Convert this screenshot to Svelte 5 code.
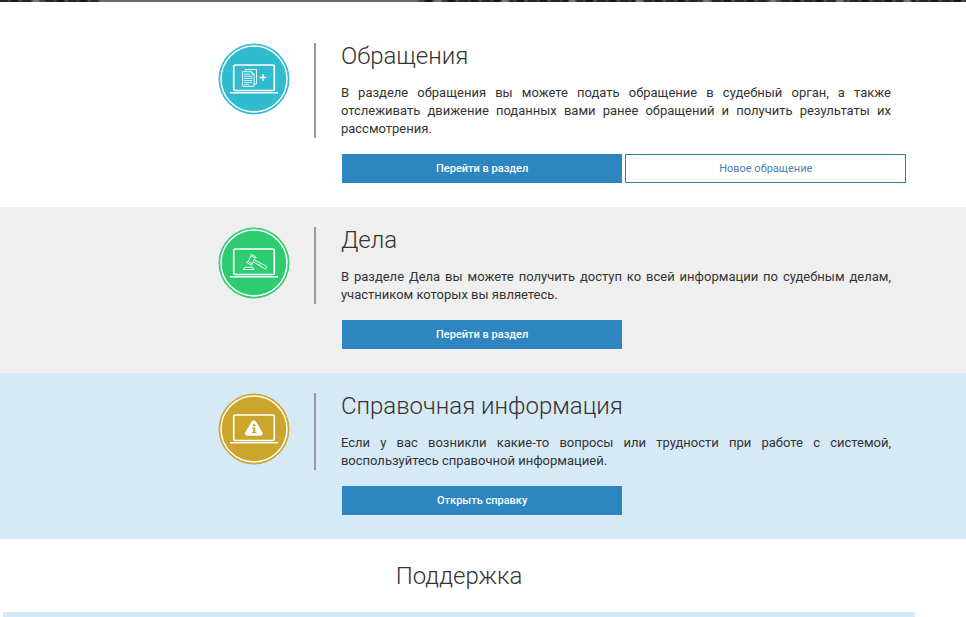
<script lang="ts">
	const sections = [
		{
			id: 'appeals',
			title: 'Обращения',
			text: 'В разделе обращения вы можете подать обращение в судебный орган, а также отслеживать движение поданных вами ранее обращений и получить результаты их рассмотрения.',
			buttons: ['Перейти в раздел', 'Новое обращение'],
		},
		{
			id: 'cases',
			title: 'Дела',
			text: 'В разделе Дела вы можете получить доступ ко всей информации по судебным делам, участником которых вы являетесь.',
			buttons: ['Перейти в раздел'],
		},
		{
			id: 'help',
			title: 'Справочная информация',
			text: 'Если у вас возникли какие-то вопросы или трудности при работе с системой, воспользуйтесь справочной информацией.',
			buttons: ['Открыть справку'],
		},
	];
</script>

<div class="banner"></div>

<main>
	{#each sections as section}
		<section class={section.id}>
			<svg class="icon" viewBox="0 0 72 72" fill="none" stroke="#fff" aria-hidden="true">
				<circle class="disc" cx="36" cy="36" r="35" />
				<circle cx="36" cy="36" r="33" stroke-width="1.5" />
				<rect x="15.7" y="22" width="40.6" height="25.5" rx="1.5" stroke-width="1.6" />
				<path d="M12 49.7h48" stroke-width="1.6" />
				{#if section.id === 'appeals'}
					<path d="M27.5 28v-1.5H38.5v14.5H36.2" stroke-width="0.9" />
					<path d="M24.5 28.7h9.2l2.4 2.4v12.2H24.5zM33.7 28.7v2.4h2.4" stroke-width="0.9" />
					<path d="M26 31.2h6M26 33.3h8.5M26 35.4h8.5M26 37.5h8.5M26 39.6h8.5M26 41.6h5" stroke-width="0.8" />
					<path d="M45 31.3v6.4M41.8 34.5h6.4" stroke-width="1.4" />
				{:else if section.id === 'cases'}
					<g stroke-width="0.9" stroke-linejoin="round">
						<path d="M33.2 28.8l-3.2 5.6 4 2.4 3.2-5.6z" />
						<path d="M32.3 28.4l.9-1.2 5 2.9-.6 1.4M29.4 34l-.8 1.4 5 2.9.9-1.4" />
						<path d="M36.4 32.9l11.6 6.2c1.3.8.3 3.4-1.3 2.6L35.3 34.9" />
						<path d="M42.5 36.2l-1.3 2.2M26.7 40.3h8l1.3 2.2H25z" />
					</g>
				{:else}
					<path d="M33.4 28.9c1-2 3.8-2 4.8 0l6 10.2c1 1.9 0 3.7-2 3.7H29.4c-2 0-3-1.8-2-3.7z" fill="#fff" stroke="none" />
					<circle class="mark" cx="36.2" cy="32.2" r="1.3" />
					<path class="mark" d="M34.3 34.4h3v4.5h1v1.4h-4.2v-1.4h1v-3h-.8z" />
				{/if}
			</svg>
			<div class="content">
				<div class="info">
					<h2>{section.title}</h2>
					<p>{section.text}</p>
				</div>
				<div class="actions">
					{#each section.buttons as label, i}
						<button type="button" class:outline={i > 0}>{label}</button>
					{/each}
				</div>
			</div>
		</section>
	{/each}
</main>

<footer>
	<h2>Поддержка</h2>
	<div class="line"></div>
</footer>

<style>
	:global(body) {
		margin: 0;
		background: #fff;
		color: #333;
		font-family: Roboto, 'Noto Sans', sans-serif;
		font-size: 13px;
		line-height: 18px;
	}
	.banner {
		height: 2px;
		background:
			linear-gradient(90deg, transparent 10%, #6b6866 11%, #6b6866 43%, transparent 44%),
			repeating-linear-gradient(90deg, transparent 0 31px, #777 34px 38px, transparent 42px 67px),
			repeating-linear-gradient(90deg, #292526 0 7px, #484546 9px, #191516 12px 17px, #555 20px, #292526 23px);
	}
	section {
		display: grid;
		grid-template-columns: 32% 1fr;
		column-gap: 24px;
		padding: 20px 60px 24px 0;
	}
	.appeals {
		--accent: #31bbce;
		padding-top: 41px;
	}
	.cases {
		--accent: #2ecc71;
		background: #efefef;
	}
	.help {
		--accent: #cca52d;
		background: #d6e9f7;
	}
	.icon {
		width: 72px;
		height: 72px;
		justify-self: end;
	}
	.disc,
	.mark {
		fill: var(--accent);
		stroke: none;
	}
	.icon .disc {
		stroke: var(--accent);
		stroke-width: 1;
	}
	.info {
		padding: 0 15px 0 25px;
		border-left: 2px solid #999;
	}
	h2 {
		margin: 0;
		font-size: 24px;
		font-weight: 300;
		line-height: 26px;
	}
	p {
		margin: 0;
		padding-top: 15px;
		text-align: justify;
	}
	.actions {
		display: grid;
		grid-template-columns: 1fr 1fr;
		gap: 3px;
		margin: 16px 0 0 28px;
	}
	button {
		height: 29px;
		padding: 0 12px;
		border: 1px solid #2e86c1;
		background: #2e86c1;
		color: #fff;
		font-family: inherit;
		font-size: 11px;
		font-weight: 500;
		cursor: pointer;
	}
	.outline {
		border-color: #337fa8;
		background: #fff;
		color: #4b82b4;
		font-weight: 400;
	}
	footer {
		padding: 24px 51px 0 3px;
		text-align: center;
	}
	.line {
		height: 5px;
		margin-top: 23px;
		background: #d6e9f7;
	}
</style>
